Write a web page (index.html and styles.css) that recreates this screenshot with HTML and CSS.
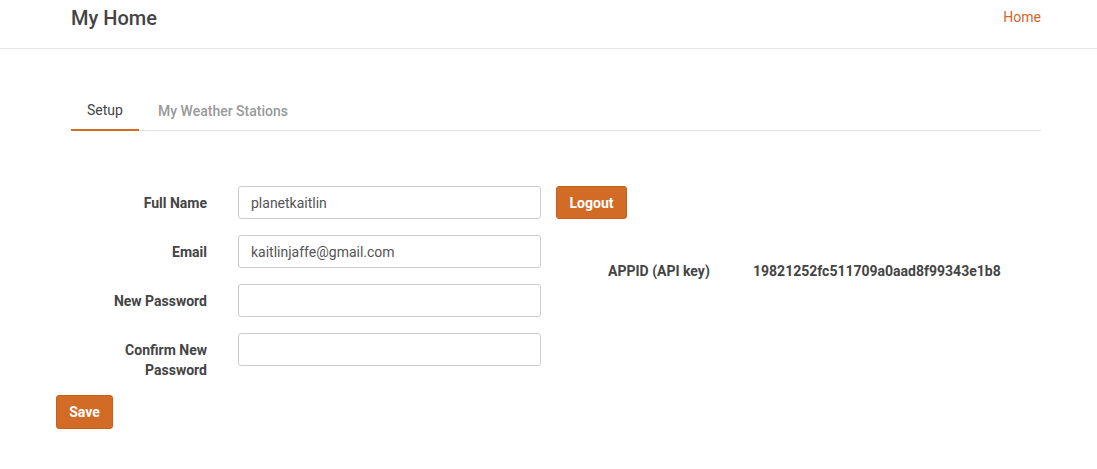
FILE: index.html
```html
<!DOCTYPE html>
<html>
<head>
<meta charset="utf-8">
<link rel="stylesheet" href="styles.css">
</head>
<body>
<header class="topbar">
  <div class="topbar-inner">
    <a class="brand">My Home</a>
    <a class="nav-home">Home</a>
  </div>
</header>
<main class="container">
  <nav class="tabs">
    <a class="tab active">Setup</a>
    <a class="tab">My Weather Stations</a>
  </nav>
  <div class="form-wrap">
    <div class="form-left">
      <div class="row">
        <label class="lbl">Full Name</label>
        <input class="field" type="text" value="planetkaitlin">
      </div>
      <div class="row">
        <label class="lbl">Email</label>
        <input class="field" type="text" value="kaitlinjaffe@gmail.com">
      </div>
      <div class="row">
        <label class="lbl">New Password</label>
        <input class="field" type="password">
      </div>
      <div class="row">
        <label class="lbl">Confirm New Password</label>
        <input class="field" type="password">
      </div>
      <button class="btn btn-save">Save</button>
    </div>
    <div class="form-right">
      <button class="btn btn-logout">Logout</button>
      <div class="appid">
        <span class="appid-label">APPID (API key)</span>
        <span class="appid-value">19821252fc511709a0aad8f99343e1b8</span>
      </div>
    </div>
  </div>
</main>
</body>
</html>
```

FILE: styles.css
```css
* { box-sizing: border-box; }
body {
  margin: 0;
  font-family: Roboto, "Liberation Sans", sans-serif;
  font-size: 14px;
  color: #444;
  background: #fff;
}
.topbar {
  height: 49px;
  border-bottom: 1px solid #e7e7e7;
}
.topbar-inner {
  width: 970px;
  margin-left: 71px;
  display: flex;
  justify-content: space-between;
  align-items: flex-start;
}
.brand {
  font-size: 20px;
  font-weight: 500;
  color: #444;
  line-height: 22px;
  margin-top: 7px;
}
.nav-home {
  color: #d2652a;
  font-size: 14px;
  line-height: 20px;
  margin-top: 7px;
}
.container {
  width: 970px;
  margin-left: 71px;
  padding-top: 42px;
}
.tabs {
  display: flex;
  gap: 4px;
  border-bottom: 1px solid #ddd;
}
.tab {
  padding: 0 15px;
  height: 40px;
  line-height: 40px;
  color: #999;
  font-size: 14px;
  font-weight: 500;
  margin-bottom: -1px;
}
.tab.active {
  padding: 0 15px 0 16px;
  width: 68px;
  color: #444;
  font-weight: 400;
  border-bottom: 2px solid #d26b25;
  line-height: 39px;
}
.form-wrap {
  display: flex;
  margin-top: 55px;
  margin-left: -15px;
}
.form-left {
  display: flex;
  flex-direction: column;
}
.row {
  display: flex;
  align-items: flex-start;
  margin-bottom: 16px;
}
.lbl {
  width: 151px;
  padding-left: 15px;
  text-align: right;
  font-weight: 700;
  line-height: 20px;
  padding-top: 7px;
  color: #444;
}
.field {
  margin-left: 31px;
  width: 303px;
  height: 33px;
  border: 1px solid #ccc;
  border-radius: 3px;
  padding: 0 12px;
  font-family: Roboto, "Liberation Sans", sans-serif;
  font-size: 14px;
  color: #555;
  outline: none;
}
.btn {
  background: #d26b25;
  border: 1px solid #c8601c;
  border-radius: 3px;
  color: #fff;
  font-family: Roboto, "Liberation Sans", sans-serif;
  font-size: 14px;
  font-weight: 700;
  padding: 0 12px;
  cursor: pointer;
}
.btn-save {
  align-self: flex-start;
  width: 57px;
  height: 34px;
  margin-top: -1px;
}
.form-right {
  margin-left: 15px;
  display: flex;
  flex-direction: column;
  align-items: flex-start;
}
.btn-logout {
  width: 71px;
  height: 33px;
}
.appid {
  display: flex;
  margin-top: 42px;
  padding-left: 52px;
  font-weight: 700;
  line-height: 20px;
  color: #444;
}
.appid-label { width: 145px; }
```
